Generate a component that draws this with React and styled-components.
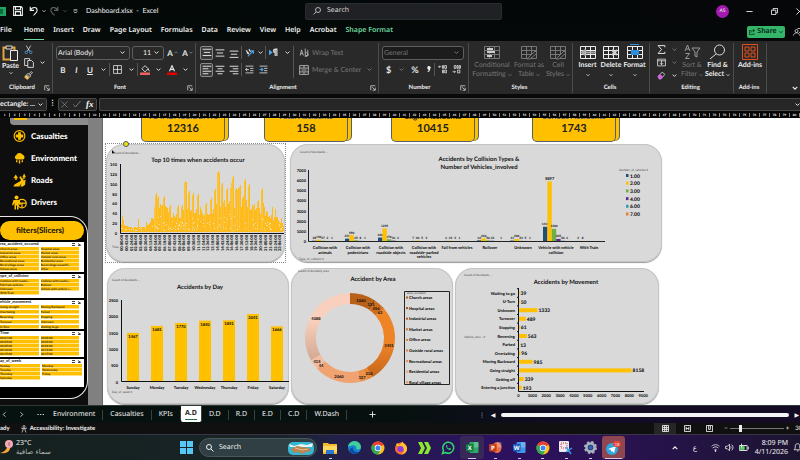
import React from "react";
import styled, { createGlobalStyle, css } from "styled-components";

const UI = '"Noto Sans", "Open Sans", sans-serif';
const NARROW = 'Lato, "Open Sans", sans-serif';
const CHART = 'Lato, "Open Sans", sans-serif';
const GOLD = "#ffc000";

const GlobalStyle = createGlobalStyle`
  * { box-sizing: border-box; }
  body { margin: 0; background: #050808; overflow: hidden; text-rendering: geometricPrecision; }
  button, input, select { font: inherit; color: inherit; background: none; border: 0; padding: 0; margin: 0; min-width: 0; text-rendering: inherit; }
  svg { display: block; flex: none; }
`;

/* ---------- icons ---------- */

const Icon = ({ s = 10, w, sw = 1.4, box = 16, children }) => (
  <svg width={w || s} height={s} viewBox={`0 0 ${w ? (box * w) / s : box} ${box}`} fill="none" stroke="currentColor" strokeWidth={sw} aria-hidden="true">
    {children}
  </svg>
);
const Chevron = ({ s = 5 }) => <Icon s={s} sw={3}><path d="M2 5l6 6 6-6" /></Icon>;
const Lines = ({ rows }) => <Icon s={10} sw={1.5}>{rows.map(([x, y, l]) => <path key={y} d={`M${x} ${y}h${l}`} />)}</Icon>;
const Launcher = () => <Icon s={6} sw={1.8}><path d="M2 14V2h12M6 6l7 7M14 7v7H7" /></Icon>;
const GridArt = ({ accent, extra }) => (
  <svg width="18" height="16" viewBox="0 0 18 16" fill="none" stroke="currentColor" aria-hidden="true">
    <path d="M1.5 2.5h15v12h-15zM1.5 6.5h15M1.5 10.5h15M6.5 2.5v12M11.5 2.5v12" />
    {accent && <rect x="5" y="6" width="8" height="5" fill={accent} stroke="none" />}
    {extra}
  </svg>
);

/* ---------- window frame ---------- */

const Window = styled.div`
  min-height: 100vh; display: flex; flex-direction: column; overflow: hidden;
  font: 7px/10px ${UI}; color: #f2f2f2; background: #050808;
`;
const TitleBar = styled.header`
  height: 22px; display: grid; grid-template-columns: 305px minmax(80px, 197px) 1fr; align-items: center;
  background: linear-gradient(90deg, #040a08, #030708 60%, #060709);
`;
const QuickAccess = styled.div`display: flex; align-items: center; gap: 3px;`;
const QuickButton = styled.button`
  display: flex; align-items: center; justify-content: center; width: ${p => p.$w || 12}px; height: 14px;
  color: ${p => (p.$dim ? "#666" : "#f2f2f2")};
`;
const DocTitle = styled.span`margin-left: 2px; white-space: pre; font-family: ${NARROW};`;
const TopSearch = styled.label`
  display: flex; align-items: center; gap: 6px; height: 17px; padding-left: 7px;
  background: #202124; border: 1px solid #2b2c2f; border-radius: 2px; color: #d8d8d8;
  input { flex: 1; } input::placeholder { color: #d8d8d8; opacity: 1; }
`;
const WindowButtons = styled.div`display: flex; justify-content: flex-end; align-items: center; gap: 13px; margin-right: -5px;`;
const Avatar = styled.button`
  width: 13px; height: 13px; border-radius: 50%; background: #a21bae; font-size: 5px; line-height: 13px; text-align: center; margin-right: 1px;
`;

const TabStrip = styled.nav`display: flex; align-items: center; height: 19px; background: linear-gradient(90deg, #030a08, #050708);`;
const RibbonTab = styled.button`
  height: 16px; margin-right: ${p => (p.$first ? 12 : 9)}px; font-weight: 600; white-space: nowrap;
  color: ${p => (p.$context ? "#70d8a0" : "#f2f2f2")};
  border-bottom: 1px solid ${p => (p.$active ? "#70d8a0" : "transparent")};
`;
const ShareButton = styled.button`
  display: flex; align-items: center; justify-content: center; gap: 2px; width: 38px; height: 12px; margin-left: auto;
  border-radius: 2px; background: #34b56a; color: #06200f; font-weight: 600;
`;
const PeopleButton = styled.button`margin: 0 -1px 0 8px;`;

/* ---------- ribbon ---------- */

const Ribbon = styled.section`display: flex; height: 53px; background: #292929; padding: 2px 0 1px; font-family: ${NARROW};`;
const Group = styled.section`
  flex: ${p => (p.$w ? `0 0 ${p.$w}px` : "1 1 0")}; min-width: 0;
  display: flex; flex-direction: column; border-right: ${p => (p.$w ? "1px solid #4c4c4c" : "0")};
`;
const GroupBody = styled.div`flex: 1; display: flex; padding-left: ${p => p.$pad || 0}px;`;
const GroupFoot = styled.footer`
  display: grid; grid-template-columns: 1fr auto; align-items: center; height: 10px; padding-right: 2px;
  font-size: 6px; font-weight: 700; text-align: center; color: #eee;
`;
const Column = styled.div`display: flex; flex-direction: column; padding-top: ${p => p.$top || 0}px;`;
const Row = styled.div`display: flex; align-items: center; height: ${p => p.$h || 17}px; gap: ${p => p.$gap || 0}px;`;
const Tool = styled.button`
  display: flex; align-items: center; justify-content: center; gap: 3px; white-space: nowrap;
  width: ${p => (p.$w ? `${p.$w}px` : "auto")}; height: ${p => p.$h || 14}px; border-radius: 2px;
  color: ${p => (p.$dim ? "#777" : "#e6e6e6")}; margin-left: ${p => p.$m || 0}px;
  ${p => p.$on && css`border: 1px solid #8a8a8a; background: #383838;`}
`;
const Letter = styled(Tool)`gap: 1px; font-size: ${p => p.$size || 8}px; font-weight: 700; font-style: ${p => (p.$italic ? "italic" : "normal")}; text-decoration: ${p => (p.$underline ? "underline" : "none")};`;
const Rule = styled.i`width: 1px; height: ${p => p.$h || 13}px; background: #555; flex: none;`;
const BigTool = styled.button`
  width: ${p => p.$w}px; display: flex; flex-direction: column; align-items: center; padding-top: 1px;
  line-height: 9px; color: ${p => (p.$dim ? "#777" : "#eee")};
  svg + span { margin-top: 1px; }
`;
const BigLabel = styled.span`display: flex; align-items: center; gap: 2px; white-space: nowrap; min-height: 9px; font-weight: ${p => (p.$strong ? 700 : 400)};`;
const Picker = styled.label`
  display: flex; align-items: center; width: ${p => p.$w}px; height: 14px; padding: 0 4px 0 ${p => p.$pad || 1}px;
  border: 1px solid #5e5e5e; border-radius: 3px; color: ${p => (p.$dim ? "#777" : "#f2f2f2")};
  background: ${p => (p.$dim ? "#1c1c1c" : "transparent")};
  select { flex: 1; appearance: none; }
`;

/* ---------- formula bar and ruler ---------- */

const FormulaBar = styled.section`display: flex; align-items: center; height: 18px; padding-top: 2px; gap: 2px; background: #070a09;`;
const NameBox = styled.label`
  display: flex; align-items: center; width: 47px; height: 13px; overflow: hidden; padding-right: 3px;
  background: #262626; border: 1px solid #4a4a4a; border-left: 0; border-radius: 0 2px 2px 0;
  input { flex: 1; width: 38px; font-family: ${NARROW}; font-weight: 700; }
`;
const BarDots = styled.span`width: 7px; text-align: center; font-weight: 700;`;
const FxBox = styled.div`
  display: flex; align-items: center; justify-content: space-around; width: 39px; height: 13px;
  background: #262626; border: 1px solid #4a4a4a; border-radius: 2px; color: #999;
`;
const FxButton = styled.button`font: italic 700 9px/11px "Liberation Serif", serif; color: #fff;`;
const FormulaInput = styled.label`
  flex: 1; height: 13px; display: flex; align-items: center; background: #262626; border: 1px solid #4a4a4a; border-right: 0; border-radius: 2px 0 0 2px;
  input { flex: 1; }
`;
const Ruler = styled.div`display: flex; height: 6px; overflow: hidden; background: #050505;`;
const RulerMark = styled.span`
  flex: 1 0 10px; height: 4px; margin-top: 1px; border-right: 1px solid #888;
  font: 700 3px/4px ${CHART}; text-align: center; color: #fff;
`;

/* ---------- worksheet ---------- */

const Sheet = styled.main`flex: 1; display: grid; grid-template-columns: 103px minmax(0, 1fr); min-height: 287px; background: #fff; overflow: hidden;`;
const Side = styled.aside`background: #808080; padding-right: 14px; display: flex; border-right: 1px solid #666; overflow: hidden;`;
const SidePanel = styled.div`flex: 1; min-width: 0; background: #0e0e0e; display: flex; flex-direction: column;`;
const Shelf = styled.div`height: 7px; margin-left: 10px; padding-left: 4px; background: #8c8c8c; border-bottom-left-radius: 4px;
  &::before { content: ""; display: block; width: 13px; height: 2px; background: ${GOLD}; }`;
const Menu = styled.nav`display: flex; flex-direction: column; padding-left: 12px; height: 91px;`;
const MenuLink = styled.a`
  display: flex; align-items: center; gap: 4px; height: 22px;
  color: #fff; text-decoration: none; font: 900 8px/12px ${NARROW};
`;
const SlicerFrame = styled.section`
  flex: 1; margin: 0 0 6px; overflow: hidden; border: solid #e8e8e8; border-width: 1px 1px 1px 0;
  border-radius: 0 18px 18px 0; padding: 4px 3px 0 0; background: #000;
`;
const SlicerButton = styled.button`
  display: block; width: 100%; height: 19px; border-radius: 10px; background: ${GOLD}; color: #1f1a00;
  font: 900 8px/19px ${NARROW}; padding-right: 4px;
`;
const Slicer = styled.section`
  display: flex; flex-direction: column; height: ${p => p.$h}px; margin-top: 2px; background: #fff; color: #111; overflow: hidden;
  font: 700 4px/4px ${CHART};
`;
const SlicerHead = styled.header`display: flex; justify-content: space-between; height: 5px; padding: 0 3px 0 0; white-space: nowrap; svg { margin-top: 1px; }`;
const SlicerGrid = styled.div`
  display: grid; grid-template-columns: 1fr 1fr; grid-auto-rows: 4px; gap: ${p => (p.$loose ? 1 : 0)}px 2px;
  margin-right: ${p => (p.$scroll ? 5 : 2)}px;
`;
const SlicerItem = styled.button`height: 4px; background: ${GOLD}; box-shadow: inset 0 -1px 0 #ffe08a; color: #2a1e00; text-align: left; font-size: 3px; line-height: 4px; white-space: nowrap; overflow: hidden;`;

const Canvas = styled.div`display: flex; flex-direction: column; min-width: 0;`;
const KpiRow = styled.div`display: grid; grid-template-columns: 123fr 127fr 141fr 268fr; height: 26px; padding-left: 38px;`;
const Kpi = styled.article`
  width: 84px; height: 24px; background: ${GOLD}; border: 1px solid #53606b; border-top: 0; border-radius: 0 0 5px 5px;
  box-shadow: 3px -1px 0 ${GOLD}, 4px -1px 0 #53606b; text-align: center; overflow: hidden; color: #222; font-family: ${CHART};
`;
const KpiLabel = styled.h3`margin: -7px 0 0; font-size: 8px; line-height: 10px; font-weight: 700; color: ${p => (p.$dark ? "#222" : "#4a5680")}; white-space: nowrap;`;
const KpiValue = styled.p`margin: 2px 0 0; font-size: 11px; line-height: 12px; font-weight: 700;`;
const TopCharts = styled.div`display: grid; grid-template-columns: 179fr 372fr; gap: 5px; padding: 0 138px 0 3px;`;
const BottomCharts = styled.div`display: grid; grid-template-columns: 182fr 162fr 204fr; gap: 2px; padding: 6px 141px 0 4px;`;
const Card = styled.article`position: relative; background: #d9d9d9; border-radius: 18px; box-shadow: inset 0 0 0 1px #c4c4c4, 0 1px 1px #999;`;
const Selection = styled.div`outline: 1px dotted #888;`;
const Handle = styled.i`position: absolute; left: 17px; top: -3px; width: 6px; height: 6px; border-radius: 50%; background: #f4e600; border: 1px solid #4d5a66;`;
const Plot = styled.svg`width: 100%; height: auto; font-family: ${CHART}; font-weight: 900; fill: #111;`;

const T = ({ x, y, s = 4, a = "middle", children, ...rest }) => (
  <text x={x} y={y} fontSize={s} textAnchor={a} {...rest}>{children}</text>
);
const Title = p => <T s={6} fontWeight="700" {...p} />;
const Field = ({ x, y, children = "Count of Accidents …" }) => <T x={x} y={y} s={3} a="start" fill="#444" fontWeight="400">{children}</T>;

/* ---------- chart data ---------- */

const envelope = [[120, 8], [132, 3], [145, 4], [153, 13], [157, 24], [163, 26], [170, 17], [178, 14], [186, 22], [192, 24], [200, 20], [208, 18], [217, 26], [224, 24], [231, 30], [237, 28], [245, 30], [251, 24], [258, 20], [263, 22], [270, 14], [277, 12], [283, 7]];
const peaks = { 122: 15, 123: 11, 138: 12, 146: 9, 155: 26, 156: 38, 158: 35, 162: 26, 164: 35, 167: 23, 170: 26, 178: 26, 182: 26, 185: 50, 186: 49, 189: 40, 193: 38, 198: 37, 200: 24, 206: 28, 211: 33, 215: 42, 218: 60, 219: 58, 222: 48, 224: 31, 227: 43, 231: 45, 232: 50, 233: 55, 236: 43, 238: 43, 240: 46, 245: 52, 249: 47, 254: 27, 258: 31, 262: 43, 263: 28, 268: 14, 272: 24, 275: 22, 281: 13 };
const level = x => {
  const i = envelope.findIndex(([px]) => px >= x);
  if (i < 1) return envelope[0][1];
  const [x0, y0] = envelope[i - 1];
  const [x1, y1] = envelope[i];
  return y0 + ((y1 - y0) * (x - x0)) / (x1 - x0);
};
const noise = n => { const v = Math.sin(n * 12.9898) * 43758.5453; return v - Math.floor(v); };
const timeBars = Array.from({ length: 163 }, (_, i) => {
  const x = 120 + i + 1;
  return [x, peaks[x] || Math.round(level(x) * (0.7 + noise(i) * 0.5))];
});
const specks = Array.from({ length: 120 }, (_, i) => {
  const x = 121 + Math.floor(noise(i + 500) * 162);
  return [x, 230 - Math.floor(noise(i + 900) * Math.max(3, level(x) * 0.6))];
});
const timeFill = `M121 232${envelope.map(([x, h]) => `L${Math.max(121, x)} ${231 - h * 0.8}`).join("")}V232Z`;

const collisions = [
  [["Collision with", "animals"], [28, 130, 27, 2, 1]],
  [["Collision with", "pedestrians"], [231, 590, 65, 8, 1]],
  [["Collision with", "roadside objects"], [340, 1239, 170, 36, 4]],
  [["Collision with", "roadside-parked", "vehicles"], [7, 40, 5, 2]],
  [["Fall from vehicles"], [6, 24, 3, 1]],
  [["Rollover"], [64, 260, 50, 22, 0, 1]],
  [["Unknown"], [41, 200, 24, 5, 1]],
  [["Vehicle with vehicle", "collision"], [1410, 5897, 1200, 205, 30, 6]],
  [["With Train"], [2, 8]],
];
const seriesColors = ["#1f4e79", GOLD, "#70ad47", "#5b2d90", "#2e9bc6", "#ed7d31"];
const days = [["Sunday", 1467], ["Monday", 1681], ["Tuesday", 1770], ["Wednesday", 1840], ["Thursday", 1851], ["Friday", 2041], ["Saturday", 1666]];
const movements = [["Waiting to go", 39], ["U-Turn", 50], ["Unknown", 1333], ["Turnover", 489], ["Stopping", 61], ["Reversing", 563], ["Parked", 13], ["Overtaking", 96], ["Moving Backward", 985], ["Going straight", 8158], ["Getting off", 339], ["Entering a junction", 193]];
const areas = [
  ["Church areas", 1060, "#b96118"], ["Hospital areas", 121, "#a9540f"], ["Industrial areas", 456, "#cf6c1c"], ["Market areas", 63, "#d87420"],
  ["Office areas", 3451, "url(#office)"], ["Outside rural areas", 218, "#e8862f"], ["Recreational areas", 327, "#ee8f4a"],
  ["Residential areas", 2060, "#f0a271"], ["Rural village areas", 44, "#f5b593"], ["School areas", 415, "#f2bda2"], ["Other", 4088, "url(#other)"],
];
const swatches = ["#b96118", "#a9540f", "#c65911", "#d87420", "#ed7d31", "#ed7d31", "#f08c45", "#f4a36f", "#f0904f"];
const areaSum = areas.reduce((t, a) => t + a[1], 0);
const polar = (r, f) => `${350 + r * Math.sin(f * 2 * Math.PI)} ${338 - r * Math.cos(f * 2 * Math.PI)}`;
const ring = (f0, f1) => {
  const big = f1 - f0 > 0.5 ? 1 : 0;
  return `M${polar(45, f0)}A45 45 0 ${big} 1 ${polar(45, f1)}L${polar(34, f1)}A34 34 0 ${big} 0 ${polar(34, f0)}Z`;
};
const areaLabels = [[1060, 361, 302], [121, 371, 306], [456, 376, 310], [63, 380, 314], [3451, 389, 347], [218, 369, 375], [327, 362, 379], [2060, 339, 378], [44, 321, 367], [415, 317, 363], [4088, 316, 320]];

const TimesChart = () => (
  <Plot viewBox="106 144 179 118" role="img" aria-label="Top 10 times when accidents occur">
    <Field x={113} y={154} />
    <path d="M112 150l3 3h-2l-1 1z" fill="#111" />
    <Title x={198} y={162}>Top 10 times when accidents occur</Title>
    {[140, 120, 100, 80, 60, 40, 20, 0].map((v, i) => <T key={v} x={117} y={166 + i * 9.85} a="end">{v}</T>)}
    <path d="M121 232h162v-2h-162z" fill="#fff3b8" />
    <path d={timeFill} fill="#fdbb1e" />
    {timeBars.map(([x, h]) => <rect key={x} x={x} y={231 - h} width="1" height={h} fill="#fdbb1e" />)}
    {timeBars.filter(([x]) => peaks[x] > 24).map(([x, h]) => <rect key={x} x={x - 1} y={233 - h} width="1" height={h - 2} fill="#fbc23c" />)}
    {specks.map(([x, y], i) => <rect key={i} x={x} y={y} width="1" height="1" fill={i % 3 ? "#f9e2a0" : "#e4dcc8"} />)}
    <path d="M120.500 164v69.500H284" fill="none" stroke="#111" />
    {Array.from({ length: 34 }, (_, i) => {
      const m = i * 42;
      const label = `${String(Math.floor(m / 60)).padStart(2, "0")}:${String(m % 60).padStart(2, "0")}:00`;
      return <text key={i} fontSize="4" textAnchor="end" transform={`translate(${123 + i * 4.8} 235) rotate(-90)`}>{label}</text>;
    })}
    <Field x={112} y={248}>Time</Field>
  </Plot>
);

const CollisionChart = () => (
  <Plot viewBox="290 144 372 118" role="img" aria-label="Accidents by collision types">
    <Field x={300} y={153} />
    <Title x={479} y={161}>Accidents by Collision Types &amp;</Title>
    <Title x={479} y={169}>Number of Vehicles_involved</Title>
    {[7000, 6000, 5000, 4000, 3000, 2000, 1000, 0].map((v, i) => <T key={v} x={306} y={172 + i * 10.15} a="end">{v}</T>)}
    {collisions.map(([names, values], g) => {
      const cx = 325 + g * 33;
      return (
        <g key={g}>
          {values.map((v, i) => {
            const h = v * 0.0101;
            const x = cx - 13 + i * 4.4;
            return (
              <g key={i}>
                <rect x={x} y={241 - h} width="4.4" height={h} fill={seriesColors[i]} />
                {v > 0 && <T x={x + 2.2} y={239.5 - h} s={v > 4000 ? 4 : 3}>{v}</T>}
              </g>
            );
          })}
          {names.map((n, i) => <T key={n} x={cx} y={249 + i * 4.5}>{n}</T>)}
        </g>
      );
    })}
    <path d="M308.500 170v71.500H605" fill="none" stroke="#222" />
    <Field x={619} y={171}>Number_of_vehicles ▾</Field>
    {["1.00", "2.00", "3.00", "4.00", "6.00", "7.00"].map((n, i) => (
      <g key={n}>
        <rect x="626" y={174 + i * 7.7} width="2.5" height="3" fill={seriesColors[i]} />
        <T x={630} y={177.5 + i * 7.7} s={5} a="start">{n}</T>
      </g>
    ))}
    <Field x={299} y={260}>Type_of_collision ▾</Field>
  </Plot>
);

const DayChart = () => (
  <Plot viewBox="107 268 182 136" role="img" aria-label="Accidents by day">
    <Field x={112} y={281} />
    <Title x={200} y={289}>Accidents by Day</Title>
    {[2500, 2000, 1500, 1000, 500, 0].map((v, i) => <T key={v} x={118} y={302 + i * 16.3} a="end">{v}</T>)}
    {days.map(([d, v], i) => {
      const h = v * 0.0328;
      const cx = 133 + i * 24;
      return (
        <g key={d}>
          <rect x={cx - 6} y={381 - h} width="12" height={h} fill={GOLD} />
          <T x={cx} y={386 - h}>{v}</T>
          <T x={cx} y={389}>{d}</T>
        </g>
      );
    })}
    <path d="M121.500 300v81.500H289" fill="none" stroke="#111" />
    <Field x={112} y={393}>Day_of_week ▾</Field>
  </Plot>
);

const AreaChart = () => (
  <Plot viewBox="291 268 162 136" role="img" aria-label="Accident by area">
    <defs>
      <linearGradient id="office" x1="0" y1="0" x2="0" y2="1"><stop offset="0.5" stopColor="#ef8427" /><stop offset="1" stopColor="#c5661c" /></linearGradient>
      <linearGradient id="other" x1="0" y1="0" x2="0" y2="1"><stop offset="0.4" stopColor="#f8d0bd" /><stop offset="1" stopColor="#d3a893" /></linearGradient>
    </defs>
    <Field x={298} y={272}>Count of Accident_area</Field>
    <Title x={373} y={281}>Accident by Area</Title>
    {areas.map(([n, v, c], i) => {
      const start = areas.slice(0, i).reduce((t, a) => t + a[1], 0) / areaSum;
      return <path key={n} d={ring(start, start + v / areaSum)} fill={c} />;
    })}
    {areaLabels.map(([v, x, y]) => <T key={v} x={x} y={y}>{v}</T>)}
    <path d="M404.500 291.500h45v93h-45z" fill="none" stroke="#222" />
    <Field x={407} y={294}>Area_accident</Field>
    {areas.slice(0, 9).map(([n], i) => (
      <g key={n}>
        <rect x="406" y={296.5 + i * 10.6} width="2" height="2" fill={swatches[i]} />
        <T x={409} y={299 + i * 10.6} a="start">{n}</T>
      </g>
    ))}
  </Plot>
);

const MovementChart = () => (
  <Plot viewBox="455 268 204 136" role="img" aria-label="Accidents by movement">
    <Field x={464} y={276} />
    <Title x={566} y={284}>Accidents by Movement</Title>
    {movements.map(([n, v], i) => {
      const y = 293 + i * 8.6;
      return (
        <g key={n}>
          <T x={515} y={y + 1.5} a="end">{n}</T>
          <path d={`M517 ${y - 4.3}h2`} stroke="#111" />
          <rect x="519" y={y - 2} width={v * 0.0138} height="4" fill={GOLD} />
          <T x={520 + v * 0.0138} y={y + 2} s={5} a="start">{v}</T>
        </g>
      );
    })}
    <path d="M518.500 288v103.500H644" fill="none" stroke="#111" />
    {[0, 1, 2, 3, 4, 5, 6, 7, 8, 9].map(v => <T key={v} x={518.5 + v * 13.85} y={397} s={4}>{v * 1000}</T>)}
    <Field x={464} y={338}>Vehicle_mov… ▾</Field>
  </Plot>
);

/* ---------- sheet tabs and status ---------- */

const SheetTabs = styled.nav`display: flex; align-items: center; height: 18px; border-top: 1px solid #2e3a36; background: linear-gradient(90deg, #06120f, #07100f 50%, #130c26 75%, #150b24);`;
const NavButton = styled.button`width: ${p => p.$w || 17}px; display: flex; justify-content: center; align-items: center;`;
const SheetTab = styled.button`
  height: ${p => (p.$active ? 16 : 10)}px; padding: 0 7px; white-space: nowrap;
  border-right: 1px solid #38413e; color: #f2f2f2; align-self: ${p => (p.$active ? "flex-start" : "center")};
  ${p => p.$active && css`background: #fff; color: #222; font-weight: 700; border-radius: 0 0 2px 2px; padding: 0 4px;
    span { border-bottom: 1px solid #217346; padding-bottom: 1px; }`}
`;
const Scroller = styled.div`display: flex; align-items: center; gap: 3px; width: 40%; margin-left: auto; margin-right: 1px; font-size: 6px;`;
const Thumb = styled.div`flex: 1; height: 4px; border-radius: 2px; background: #f4f4f4; margin-right: 2px;`;
const Status = styled.footer`display: flex; align-items: center; height: 11px; background: #101010; font: 700 6px/10px ${NARROW}; overflow: hidden;`;
const StatusText = styled.span`margin-left: ${p => p.$m || 0}px; white-space: nowrap;`;
const Views = styled.div`display: flex; align-items: center; margin-left: auto;`;
const ViewButton = styled.button`display: flex; align-items: center; justify-content: center; width: 22px; height: 11px; background: ${p => (p.$active ? "#262626" : "transparent")};`;
const Zoom = styled.label`
  display: flex; align-items: center; gap: 2px; margin: 0 -7px 0 4px; font-weight: 400;
  input { appearance: none; width: 54px; height: 1px; background: #777; }
  input::-webkit-slider-thumb { appearance: none; width: 3px; height: 7px; background: #eee; }
`;

/* ---------- taskbar ---------- */

const Taskbar = styled.footer`
  display: grid; grid-template-columns: 174px 1fr auto; align-items: center; height: 26px; border-top: 1px solid #3a3446;
  background: linear-gradient(90deg, #15211f, #182427 35%, #22204a 42%, #2c1160 62%, #2a1254 75%, #1c1530);
`;
const Weather = styled.button`display: flex; align-items: center; gap: 3px; text-align: left; line-height: 9px;`;
const Arabic = styled.span`display: block; font-family: "DejaVu Sans", sans-serif; font-size: 7px; color: #bbb; white-space: nowrap;`;
const Apps = styled.div`display: flex; align-items: center;`;
const AppButton = styled.button`
  position: relative; display: flex; align-items: center; justify-content: center; width: ${p => p.$w || 24}px; flex: 0 1 auto; height: 23px; border-radius: 3px;
  ${p => p.$active && css`background: ${p.$active};`}
  ${p => p.$open && css`&::after { content: ""; position: absolute; bottom: 0; width: ${p.$open}px; height: 1px; background: #d8c8e8; }`}
`;
const TaskSearch = styled.label`
  display: flex; align-items: center; gap: 5px; width: 118px; height: 19px; padding: 0 2px 0 6px; margin: 0 1px 0 1px;
  border: 1px solid #4a585c; border-radius: 10px; background: #303f43;
  input { flex: 1; } input::placeholder { color: #eee; opacity: 1; }
`;
const Tray = styled.div`display: flex; align-items: center; gap: 5px; margin-right: -2px;`;
const InputLang = styled.span`width: 10px; margin: 0 3px 0 10px; font-family: "DejaVu Sans", sans-serif;`;
const Clock = styled.time`text-align: right; line-height: 9px; white-space: nowrap; margin-left: 1px;`;

const Office = ({ color, dark, letter }) => (
  <svg width="13" height="13" viewBox="0 0 26 26" aria-hidden="true">
    <rect x="7" y="2" width="18" height="22" rx={letter === "P" ? 11 : 2} fill={color} />
    <path d="M16 2h7a2 2 0 0 1 2 2v9h-9z" fill="#fff" opacity=".25" />
    <rect x="0" y="6" width="15" height="15" rx="2" fill={dark} />
    <text x="7.5" y="18" fontSize="12" fontWeight="700" fill="#fff" textAnchor="middle">{letter}</text>
  </svg>
);
const Chrome = () => (
  <svg width="14" height="14" viewBox="0 0 28 28" aria-hidden="true">
    <circle cx="14" cy="14" r="13" fill="#fbc116" />
    <path d="M14 14L2.700 7.500A13 13 0 0 1 25.300 7.500z" fill="#e94235" />
    <path d="M2.700 7.500A13 13 0 0 0 14 27l5.500-10z" fill="#31a852" />
    <circle cx="14" cy="14" r="6.5" fill="#fff" /><circle cx="14" cy="14" r="5" fill="#3f83f8" />
  </svg>
);

const slicers = [
  { name: "rea_accident_occured", h: 30, scroll: true, items: ["Church areas", "Hospital areas", "Industrial areas", "Market areas", "Office areas", "Outside rural areas", "Recreational areas", "Residential areas", "Rural village areas", "Rural village areasOf…", "School areas", "Other"] },
  { name: "ype_of_collision", h: 24, scroll: true, items: ["Collision with roadsi…", "Collision with roadsi…", "Fall from vehicles", "Rollover", "Unknown", "Vehicle with vehicle c…", "With Train"] },
  { name: "ehicle_movement", h: 29, scroll: true, loose: true, items: ["Going straight", "Moving Backward", "Overtaking", "Parked", "Reversing", "Stopping", "Turnover", "Unknown", "U-Turn", "Waiting to go"] },
  { name: "Time", h: 26, scroll: true, items: ["00:01:00", "00:02:00", "00:03:00", "00:04:00", "00:05:00", "00:06:00", "00:10:00", "00:12:00", "00:15:00", "00:17:00"] },
  { name: "ay_of_week", h: 28, items: ["Sunday", "Monday", "Tuesday", "Wednesday", "Thursday", "Friday", "Saturday"] },
];

const MenuIcon = ({ kind }) => (
  <svg width="15" height={kind === "drivers" ? 17 : 14} viewBox="0 0 30 30" fill={GOLD} aria-hidden="true">
    {kind === "casualties" && <><circle cx="15" cy="15" r="11.5" fill="none" stroke={GOLD} strokeWidth="2.5" /><path d="M12 7h6v5h5v6h-5v5h-6v-5H7v-6h5z" /></>}
    {kind === "environment" && <><path d="M8 18a5 5 0 0 1 0-9 8 8 0 0 1 14-1 5.500 5.500 0 0 1 1 10z" /><path d="M9 20v4M15 20v7M21 20v4" stroke={GOLD} strokeWidth="3" /></>}
    {kind === "roads" && <><path d="M2 29c2-8 16-9 16-14 0-3-5-4-2-8l3 1c-1 3 6 4 5 9-1 6-8 6-9 12z" /><path d="M7 3l5 8H9v4H6v-4H2zM25 1l4 8h-3v4h-3V9h-2zM21 18l7-4-1 11-5 4h-5z" /></>}
    {kind === "drivers" && <><circle cx="9" cy="5" r="4" /><path d="M3 10h12l3 9-3 1-2-4v13h-3v-8H8v8H5V16l-3 5-2-1z" /><circle cx="20" cy="17" r="8.5" fill="none" stroke={GOLD} strokeWidth="2.5" /><path d="M13 16h15M20 17v8" stroke={GOLD} strokeWidth="2.5" /></>}
  </svg>
);

const Drop = ({ w = 12, dim, label }) => <Tool $w={w} $dim={dim} aria-label={label || "More options"}><Chevron /></Tool>;
const pen = <path d="M8 14l7-7 2 2-7 6H7z" fill="#292929" stroke="currentColor" />;

export default function App() {
  return (
    <Window>
      <GlobalStyle />
      <TitleBar>
        <QuickAccess>
          <QuickButton $w={6} aria-label="Excel"><svg width="6" height="9" viewBox="0 0 6 9"><path d="M0 0h6v9H0z" fill="#1fa463" /><path d="M0 2h3v5H0z" fill="#0e6b3c" /></svg></QuickButton>
          <QuickButton $w={17} aria-label="Save"><Icon s={10} sw={1.7}><path d="M1 1h12l2 2v12H1zM4 1v5h8V1M4 15V9h8v6" /></Icon></QuickButton>
          <QuickButton $w={10} aria-label="Undo"><Icon s={10} sw={1.7}><path d="M2 1v6h6M2 7c3-6 11-6 11 0 0 3-3 5-6 8" /></Icon></QuickButton>
          <QuickButton $w={3} aria-label="Undo history"><Chevron s={4} /></QuickButton>
          <QuickButton $w={12} $dim aria-label="Redo"><Icon s={10} sw={1.7}><path d="M14 1v6H8M14 7C11 1 3 1 3 7c0 3 3 5 6 8" /></Icon></QuickButton>
          <QuickButton $w={3} $dim aria-label="Redo history"><Chevron s={4} /></QuickButton>
          <QuickButton $w={12} aria-label="Customize"><Icon s={5} sw={3}><path d="M2 3h12M3 8l5 5 5-5" /></Icon></QuickButton>
          <DocTitle>Dashboard.xlsx  -  Excel</DocTitle>
        </QuickAccess>
        <TopSearch>
          <Icon s={8} sw={1.6}><circle cx="10" cy="6" r="5" /><path d="M6 10l-5 5" /></Icon>
          <input aria-label="Search" placeholder="Search" />
        </TopSearch>
        <WindowButtons>
          <Avatar>AS</Avatar>
          <QuickButton aria-label="Minimize"><Icon s={7} sw={2}><path d="M1 8h14" /></Icon></QuickButton>
          <QuickButton aria-label="Restore"><Icon s={7} sw={2}><path d="M1 5h10v10H1zM5 5V1h10v10h-4" /></Icon></QuickButton>
          <QuickButton aria-label="Close"><Icon s={7} sw={2}><path d="M1 1l14 14M15 1L1 15" /></Icon></QuickButton>
        </WindowButtons>
      </TitleBar>

      <TabStrip>
        {["File", "Home", "Insert", "Draw", "Page Layout", "Formulas", "Data", "Review", "View", "Help", "Acrobat", "Shape Format"].map((t, i) => (
          <RibbonTab key={t} $first={i === 0} $active={i === 1} $context={i === 11}>{t}</RibbonTab>
        ))}
        <ShareButton><Icon s={6} sw={1.8}><path d="M6 4H1v11h12v-4M5 10c0-4 3-6 9-6M10 0l5 4-5 4" /></Icon>Share<Chevron s={4} /></ShareButton>
        <PeopleButton aria-label="Comments"><Icon s={8}><circle cx="7" cy="6" r="3" /><path d="M1 15c0-7 12-7 12 0M9 1h6v8h-3" /></Icon></PeopleButton>
      </TabStrip>

      <Ribbon>
        <Group $w={53}>
          <GroupBody>
            <BigTool $w={21}>
              <svg width="17" height="17" viewBox="0 0 17 17" fill="none"><path d="M1.500 3.500h11v12h-11z" stroke="#e8a33a" strokeWidth="2" /><path d="M4 2h6v3H4z" fill="#292929" stroke="#ddd" /><path d="M8.500 6.500h7v10h-7z" fill="#292929" stroke="#eee" /></svg>
              <BigLabel $strong>Paste</BigLabel><Chevron s={4} />
            </BigTool>
            <Column>
              <Row $h={13}><Tool $w={15} $h={12} aria-label="Cut"><Icon s={9}><path d="M4 1l6 10M12 1L6 11" /><circle cx="4" cy="13" r="2.3" stroke="#4aa3e8" /><circle cx="12" cy="13" r="2.3" stroke="#4aa3e8" /></Icon></Tool></Row>
              <Row $h={13}>
                <Tool $w={15} $h={12} aria-label="Copy"><Icon s={10}><path d="M6 12H1V1h8v3M6 4h6l3 3v8H6z" /></Icon></Tool><Drop />
              </Row>
              <Row $h={13}><Tool $w={15} $h={12} aria-label="Format painter"><Icon s={9}><path d="M9 5l4-4 2 2-4 4M7 4l5 5-2 2-5-5z" /><path d="M4 7l5 5-3 3-5-4z" fill="#f0c060" stroke="#f0c060" /></Icon></Tool></Row>
            </Column>
          </GroupBody>
          <GroupFoot>Clipboard<Launcher /></GroupFoot>
        </Group>

        <Group $w={143}>
          <GroupBody $pad={3}>
            <Column $top={1}>
              <Row $gap={2}>
                <Picker $w={74}><select aria-label="Font"><option>Arial (Body)</option></select><Chevron /></Picker>
                <Picker $w={32} $pad={10}><select aria-label="Font size"><option>11</option></select><Chevron /></Picker>
                <Letter $w={13} aria-label="Increase font size">A<Icon s={4} sw={3}><path d="M2 9l6-6 6 6" stroke="#4aa3e8" /></Icon></Letter>
                <Letter $w={13} aria-label="Decrease font size">A<Icon s={4} sw={3}><path d="M2 3l6 6 6-6" stroke="#4aa3e8" /></Icon></Letter>
              </Row>
              <Row>
                <Letter $w={14}>B</Letter><Letter $w={13} $italic>I</Letter><Letter $w={14} $underline>U</Letter><Drop />
                <Rule />
                <Tool $w={15} aria-label="Borders"><Icon s={9}><path d="M1 1h14v14H1zM8 1v14M1 8h14" /></Icon></Tool><Drop /><Rule />
                <Tool $w={14} aria-label="Fill colour"><Icon s={10}><path d="M3 6l5-5 5 5-5 5zM13 6l2 4" /><path d="M0 14h16" stroke="#f0625d" strokeWidth="4" /></Icon></Tool><Drop />
                <Tool $w={15} aria-label="Font colour"><Icon s={10} sw={1.8}><path d="M4 10l4-9 4 9M6 7h4" /><path d="M0 14h16" stroke="#e00000" strokeWidth="4" /></Icon></Tool><Drop />
              </Row>
            </Column>
          </GroupBody>
          <GroupFoot>Font<Launcher /></GroupFoot>
        </Group>

        <Group $w={183}>
          <GroupBody $pad={4}>
            <Column $top={1}>
              <Row>
                <Tool $w={13} $on aria-label="Top align"><Lines rows={[[1, 2, 14], [3, 7, 10], [1, 12, 14]]} /></Tool>
                <Tool $w={14} aria-label="Middle align"><Lines rows={[[1, 3, 14], [3, 8, 10], [1, 13, 14]]} /></Tool>
                <Tool $w={14} aria-label="Bottom align"><Lines rows={[[1, 5, 14], [3, 10, 10], [1, 15, 14]]} /></Tool>
                <Rule />
                <Tool $w={14} aria-label="Orientation"><Icon s={9} sw={2}><path d="M2 4l5 7M7 2l3 5M3 9h4" /><path d="M5 15L15 5M15 10V5h-5" stroke="#4aa3e8" /></Icon></Tool><Drop w={9} /><Rule />
                <Tool $w={15} aria-label="Text direction"><Icon s={9} sw={2}><path d="M1 5l4 3-4 3z" fill="#4aa3e8" stroke="#4aa3e8" /><path d="M11 14V2h4M14 2v12M11 8a3 3 0 0 1 0-6" /></Icon></Tool><Drop w={12} />
              </Row>
              <Row>
                <Tool $w={13} $on aria-label="Align left"><Lines rows={[[1, 2, 14], [1, 6, 9], [1, 10, 14], [1, 14, 9]]} /></Tool>
                <Tool $w={14} aria-label="Centre"><Lines rows={[[1, 2, 14], [4, 6, 8], [1, 10, 14], [4, 14, 8]]} /></Tool>
                <Tool $w={14} aria-label="Align right"><Lines rows={[[1, 2, 14], [6, 6, 9], [1, 10, 14], [6, 14, 9]]} /></Tool>
                <Rule />
                <Tool $w={14} aria-label="Decrease indent"><Icon s={9}><path d="M1 2h14M9 6h6M9 10h6M1 14h14M7 8H1M4 5L1 8l3 3" /></Icon></Tool>
                <Tool $w={14} aria-label="Increase indent"><Icon s={9}><path d="M1 2h14M9 6h6M9 10h6M1 14h14" /><path d="M1 8h6M4 5l3 3-3 3" stroke="#4aa3e8" strokeWidth="2" /></Icon></Tool>
              </Row>
            </Column>
            <Column $top={3}><Rule $h={32} /></Column>
            <Column $top={1}>
              <Row><Tool $dim $m={5}><Icon s={10} w={10}><path d="M4 3l-2 9M4 3l3 9M3 9h3M10 1v13M10 8a3 3 0 1 1 0 5M14 3v9h-3" stroke="#bbb" /></Icon>Wrap Text</Tool></Row>
              <Row><Tool $dim $m={5}><Icon s={10} w={10}><path d="M1 1h14v14H1zM1 5h14M1 11h14M8 1v4M8 11v4M4 8h8" stroke="#bbb" /></Icon>Merge &amp; Center</Tool><Drop w={16} dim /></Row>
            </Column>
          </GroupBody>
          <GroupFoot>Alignment<Launcher /></GroupFoot>
        </Group>

        <Group $w={90}>
          <GroupBody $pad={3}>
            <Column $top={1}>
              <Row><Picker $w={82} $dim><select aria-label="Number format"><option>General</option></select><Chevron /></Picker></Row>
              <Row>
                <Letter $w={13} $size={9}>$</Letter><Drop w={12} dim /><Letter $w={16} $size={9}>%</Letter>
                <Tool $w={11} aria-label="Comma style"><Icon s={9}><path d="M6 4a3 3 0 1 1 5 3c0 3-2 5-4 6l-1-1c2-1 2-2 2-4a3 3 0 0 1-2-4z" fill="#eee" stroke="none" /></Icon></Tool><Rule />
                <Tool $w={14} aria-label="Increase decimal"><Icon s={9}><path d="M6 3H1M3 1L1 3l2 2M8 1h2v5H8zM12 1h3v5h-3zM8 9h2v5H8zM12 9h3v5h-3z" /></Icon></Tool>
                <Tool $w={14} aria-label="Decrease decimal"><Icon s={9}><path d="M1 12h5M4 10l2 2-2 2M4 1h3v5H4zM9 1h2v5H9zM13 1h2v5h-2zM10 9h4v5h-4z" /></Icon></Tool>
              </Row>
            </Column>
          </GroupBody>
          <GroupFoot>Number<Launcher /></GroupFoot>
        </Group>

        <Group $w={104}>
          <GroupBody $pad={2}>
            <BigTool $w={42} $dim><GridArt extra={<path d="M4 5h6M4 8h8M4 12h5" stroke="#ccc" strokeWidth="2" />} /><BigLabel>Conditional</BigLabel><BigLabel>Formatting<Chevron s={4} /></BigLabel></BigTool>
            <BigTool $w={32} $dim><GridArt extra={pen} /><BigLabel>Format as</BigLabel><BigLabel>Table<Chevron s={4} /></BigLabel></BigTool>
            <BigTool $w={26} $dim><GridArt extra={pen} /><BigLabel>Cell</BigLabel><BigLabel>Styles<Chevron s={4} /></BigLabel></BigTool>
          </GroupBody>
          <GroupFoot>Styles</GroupFoot>
        </Group>

        <Group $w={77}>
          <GroupBody $pad={3}>
            <BigTool $w={23}><GridArt extra={<path d="M4 8.500h13M7 5.500l-4 3 4 3" stroke="#aaa" strokeWidth="2" />} /><BigLabel $strong>Insert</BigLabel><BigLabel><Chevron s={4} /></BigLabel></BigTool>
            <BigTool $w={24}><GridArt extra={<path d="M10 6l5 5M15 6l-5 5" stroke="#ccc" strokeWidth="2" />} /><BigLabel $strong>Delete</BigLabel><BigLabel><Chevron s={4} /></BigLabel></BigTool>
            <BigTool $w={23}><GridArt accent="#2f8fdf" extra={<path d="M4 .5h9" stroke="#2f8fdf" />} /><BigLabel $strong>Format</BigLabel><BigLabel><Chevron s={4} /></BigLabel></BigTool>
          </GroupBody>
          <GroupFoot>Cells</GroupFoot>
        </Group>

        <Group $w={84}>
          <GroupBody $pad={4}>
            <Column>
              <Row $h={13}><Tool $w={14} $h={12} aria-label="AutoSum"><Icon s={9} sw={1.7}><path d="M14 4V1H2l6 7-6 7h12v-3" /></Icon></Tool><Drop dim /></Row>
              <Row $h={13}><Tool $w={14} $h={12} aria-label="Fill"><Icon s={9}><path d="M1 2h14v12H1zM8 4v8M5 9l3 3 3-3M1 5h14" /></Icon></Tool><Drop dim /></Row>
              <Row $h={13}><Tool $w={14} $h={12} aria-label="Clear"><Icon s={9}><path d="M2 10l7-8 5 4-7 8H4z" stroke="#ddd" /><path d="M2 10l3-4 5 4-3 4H4z" fill="#d65fe0" stroke="#d65fe0" /></Icon></Tool><Drop /></Row>
            </Column>
            <BigTool $w={24} $dim><svg width="17" height="16" viewBox="0 0 17 16" fill="none" stroke="#999"><path d="M1 7l2.500-6L6 7M2 5h3M1.500 9.500h4l-4 5h4M8 4h8l-3 4v5l-2-1V8z" /></svg><BigLabel>Sort &amp;</BigLabel><BigLabel>Filter<Chevron s={4} /></BigLabel></BigTool>
            <BigTool $w={27}><svg width="17" height="16" viewBox="0 0 17 16" fill="none" stroke="#ddd"><circle cx="10.5" cy="6" r="5" /><path d="M7 10l-6 5" /></svg><BigLabel $strong>Find &amp;</BigLabel><BigLabel $strong>Select<Chevron s={4} /></BigLabel></BigTool>
          </GroupBody>
          <GroupFoot>Editing</GroupFoot>
        </Group>

        <Group $w={33}>
          <GroupBody>
            <BigTool $w={32}><svg width="16" height="16" viewBox="0 0 16 16" fill="none" stroke="#e0501e"><path d="M.5.5h15v15H.5zM3 3h4v4H3zM9 3h4v4H9zM3 9h4v4H3zM9 9h4v4H9z" /></svg><BigLabel $strong>Add-ins</BigLabel></BigTool>
          </GroupBody>
          <GroupFoot>Add-ins</GroupFoot>
        </Group>
        <Group><GroupBody /><GroupFoot><span /><Chevron s={6} /></GroupFoot></Group>
      </Ribbon>

      <FormulaBar>
        <NameBox><input aria-label="Name box" defaultValue="ectangle: ..." /><Chevron /></NameBox>
        <BarDots>⋮</BarDots>
        <FxBox>
          <button aria-label="Cancel"><Icon s={7}><path d="M1 1l14 14M15 1L1 15" /></Icon></button>
          <button aria-label="Enter"><Icon s={8}><path d="M1 9l4 5L15 2" /></Icon></button>
          <FxButton>fx</FxButton>
        </FxBox>
        <FormulaInput><input aria-label="Formula" /><Chevron /></FormulaInput>
      </FormulaBar>
      <Ruler>{Array.from({ length: 80 }, (_, i) => <RulerMark key={i}>{i + 1}</RulerMark>)}</Ruler>

      <Sheet>
        <Side>
          <SidePanel>
            <Shelf />
            <Menu>
              <MenuLink href="#casualties"><MenuIcon kind="casualties" />Casualties</MenuLink>
              <MenuLink href="#environment"><MenuIcon kind="environment" />Environment</MenuLink>
              <MenuLink href="#roads"><MenuIcon kind="roads" />Roads</MenuLink>
              <MenuLink href="#drivers"><MenuIcon kind="drivers" />Drivers</MenuLink>
            </Menu>
            <SlicerFrame>
              <SlicerButton>filters(Slicers)</SlicerButton>
              {slicers.map(({ name, h, scroll, loose, items }) => (
                <Slicer key={name} $h={h}>
                  <SlicerHead>{name}<svg width="9" height="3" viewBox="0 0 9 3" stroke="#444" fill="none"><path d="M0 .5h3M0 2.500h3M6 .5l3 2M6 2.500h2" /></svg></SlicerHead>
                  <SlicerGrid $scroll={scroll} $loose={loose}>{items.map((t, i) => <SlicerItem key={i}>{t}</SlicerItem>)}</SlicerGrid>
                </Slicer>
              ))}
            </SlicerFrame>
          </SidePanel>
        </Side>
        <Canvas>
          <KpiRow>
            <Kpi><KpiLabel>TOTAL ACCIDENTS</KpiLabel><KpiValue>12316</KpiValue></Kpi>
            <Kpi><KpiLabel>Fatal Accidents</KpiLabel><KpiValue>158</KpiValue></Kpi>
            <Kpi><KpiLabel $dark>Slight Accidents</KpiLabel><KpiValue>10415</KpiValue></Kpi>
            <Kpi><KpiLabel>Serious Accidents</KpiLabel><KpiValue>1743</KpiValue></Kpi>
          </KpiRow>
          <TopCharts>
            <Selection><Card><TimesChart /><Handle /></Card></Selection>
            <Card><CollisionChart /></Card>
          </TopCharts>
          <BottomCharts>
            <Card><DayChart /></Card>
            <Card><AreaChart /></Card>
            <Card><MovementChart /></Card>
          </BottomCharts>
        </Canvas>
      </Sheet>

      <SheetTabs>
        <NavButton $w={8} aria-label="Previous sheet"><Icon s={5} sw={2.5}><path d="M11 1L4 8l7 7" /></Icon></NavButton>
        <NavButton $w={26} aria-label="Next sheet"><Icon s={5} sw={2.5}><path d="M5 1l7 7-7 7" /></Icon></NavButton>
        <NavButton $w={12} aria-label="All sheets"><Icon s={7} sw={2}><path d="M1 8h3M7 8h3M13 8h3" /></Icon></NavButton>
        {["Environment", "Casualties", "KPIs", "A.D", "D.D", "R.D", "E.D", "C.D", "W.Dash"].map(t => (
          <SheetTab key={t} $active={t === "A.D"}><span>{t}</span></SheetTab>
        ))}
        <NavButton $w={50} aria-label="New sheet"><Icon s={7} sw={2}><path d="M8 1v14M1 8h14" /></Icon></NavButton>
        <Scroller><span>⋮</span><NavButton $w={10} aria-label="Scroll left">◀</NavButton><Thumb /><span>▶</span></Scroller>
      </SheetTabs>

      <Status>
        <StatusText>ady</StatusText>
        <StatusText $m={10}><Icon s={8}><circle cx="8" cy="3" r="2" /><path d="M2 6l4 1v3l-2 5M14 6l-4 1v3l2 5M6 7h4" /></Icon></StatusText>
        <StatusText $m={2}>Accessibility: Investigate</StatusText>
        <Views>
          <ViewButton $active aria-label="Normal view"><Icon s={7} sw={2}><path d="M1 1h14v14H1zM6 1v14M10 1v14M1 6h14M1 10h14" /></Icon></ViewButton>
          <ViewButton aria-label="Page layout view"><Icon s={7} sw={2}><path d="M1 1h14v14H1zM5 4v8M11 4v8M5 8h6" /></Icon></ViewButton>
          <ViewButton aria-label="Page break view"><Icon s={7} sw={2}><path d="M1 1h14v14H1zM6 1v9M10 1v9M6 10h4" /></Icon></ViewButton>
          <Zoom>− <input type="range" aria-label="Zoom" min="0" max="100" defaultValue="18" /> + <StatusText $m={4}>30%</StatusText></Zoom>
        </Views>
      </Status>

      <Taskbar>
        <Weather>
          <svg width="13" height="16" viewBox="0 0 13 16"><path d="M8 3c5 5 1 12-8 10 5-1 8-5 8-10z" fill="#f8a53a" /><circle cx="9" cy="4" r="4" fill="#f7a8b8" /><text x="9" y="6" fontSize="5" textAnchor="middle" fill="#222">1</text></svg>
          <span>23°C<Arabic dir="rtl" lang="ar">سماء صافية</Arabic></span>
        </Weather>
        <Apps>
          <AppButton aria-label="Start"><svg width="13" height="13" viewBox="0 0 13 13" fill="#56c8f5"><path d="M0 0h6v6H0zM7 0h6v6H7zM0 7h6v6H0zM7 7h6v6H7z" /></svg></AppButton>
          <TaskSearch>
            <Icon s={8} sw={2}><circle cx="6" cy="6" r="5" /><path d="M10 10l5 5" /></Icon>
            <input aria-label="Search Windows" placeholder="Search" />
            <svg width="26" height="14" viewBox="0 0 26 14"><rect y="1" width="26" height="13" rx="5" fill="#35b6d3" /><path d="M1 3l5 2 7-2 6 1 6-2-1 4H2z" fill="#e8f4f4" /><path d="M3 8l6-3 5 1 7 1 2 3-5 1-3 2-5-2-4 1z" fill="#b98352" /><path d="M7 7l7 2 6-1" stroke="#edc08d" fill="none" /></svg>
          </TaskSearch>
          <AppButton $open={3} aria-label="File Explorer"><svg width="14" height="12" viewBox="0 0 14 12"><path d="M0 1h5l1 1h8v10H0z" fill="#f6b82d" /><path d="M0 4h14v6H0z" fill="#ffd860" /><path d="M3 8h8v4H3z" fill="#2d78cf" /></svg></AppButton>
          <AppButton aria-label="Edge"><svg width="13" height="13" viewBox="0 0 26 26"><circle cx="13" cy="13" r="13" fill="#1683d8" /><path d="M0 12C1-3 25-4 26 12c0 6-8 6-10 3 2-4-3-8-8-6-5 1-8 2-8 3z" fill="#41cf9a" /><path d="M10 13c-2 8 7 11 13 8-4 6-12 6-17 2s-2-10 4-10z" fill="#0d4ca0" /></svg></AppButton>
          <AppButton $w={23} aria-label="Chrome"><Chrome /></AppButton>
          <AppButton aria-label="Firefox"><svg width="14" height="14" viewBox="0 0 28 28"><circle cx="14" cy="15" r="12" fill="#ff6a2b" /><path d="M4 9l2-5 5 4 6-7c2 5 9 7 9 14 0 8-7 12-12 12 7-4 8-10 3-14z" fill="#ffc52f" /><circle cx="13" cy="16" r="6" fill="#8b3be8" /></svg></AppButton>
          <AppButton $w={23} aria-label="Downloader"><svg width="13" height="12" viewBox="0 0 13 12" fill="#8bea2e"><path d="M0 0h4l3 6-3 6H0l3-6zM6 0h4l3 6-3 6H6l3-6z" /></svg></AppButton>
          <AppButton aria-label="WhatsApp"><svg width="14" height="14" viewBox="0 0 28 28" fill="none" stroke="#30d66b" strokeWidth="3"><path d="M3 25l2-6a11 11 0 1 1 4 4z" /><path d="M10 9c0 5 4 9 9 9l1-3-3-1-2 1-3-3 1-2-1-2z" fill="#30d66b" stroke="none" /></svg></AppButton>
          <AppButton $active="#382858" $open={8} aria-label="Excel"><Office color="#2ea866" dark="#107c41" letter="X" /></AppButton>
          <AppButton $open={3} $w={23} aria-label="PowerPoint"><Office color="#ee6c43" dark="#c43e1c" letter="P" /></AppButton>
          <AppButton $open={3} aria-label="Word"><Office color="#4095e5" dark="#185abd" letter="W" /></AppButton>
          <AppButton $open={3} $w={23} aria-label="Chrome profile"><Chrome /></AppButton>
          <AppButton $open={3} aria-label="Snipping Tool"><svg width="14" height="14" viewBox="0 0 14 14"><rect width="10" height="11" rx="1" fill="#e9e9ee" /><path d="M2 2h6v5H2z" fill="none" stroke="#d13b46" strokeDasharray="1 1" /><path d="M7 6l5 7M13 7l-6 4" stroke="#3a9ae8" strokeWidth="1.5" /></svg></AppButton>
          <AppButton $open={3} aria-label="Settings"><svg width="13" height="13" viewBox="0 0 26 26" fill="none"><circle cx="13" cy="13" r="8" stroke="#a8b4bf" strokeWidth="5" /><circle cx="13" cy="13" r="11" stroke="#a8b4bf" strokeWidth="4" strokeDasharray="5 3.64" /><circle cx="13" cy="13" r="4.5" fill="#2b65a8" /></svg></AppButton>
          <AppButton $active="#8e4650" $open={17} $w={23} aria-label="Telegram"><svg width="15" height="14" viewBox="0 0 15 14"><circle cx="6" cy="8" r="6" fill="#2fa5df" /><path d="M2 8l8-3-2 7-2-2-1 1v-2z" fill="#fff" /><rect x="7" width="8" height="6" rx="3" fill="#e8453c" /><text x="11" y="5" fontSize="4" fill="#fff" textAnchor="middle">18</text></svg></AppButton>
        </Apps>
        <Tray>
          <Icon s={6} sw={3}><path d="M2 11l6-6 6 6" /></Icon>
          <InputLang>ع</InputLang>
          <Icon s={9}><path d="M1 6c4-4 10-4 14 0M3 9c3-3 7-3 10 0M6 12c1-1 3-1 4 0" /><circle cx="8" cy="14" r="1" fill="#fff" /></Icon>
          <Icon s={9}><path d="M1 6h3l4-4v12l-4-4H1zM10 6c1 1 1 3 0 4M12 3c3 3 3 7 0 10" /></Icon>
          <Icon s={10}><path d="M1 4h12v8H1zM15 6v4" /><path d="M2 5h7v6H2z" fill="#59d66b" stroke="none" /><path d="M4 1v6" /></Icon>
          <Clock>8:09 PM<br />4/11/2026</Clock>
          <Icon s={9}><path d="M2 12h12l-2-3V5c0-5-8-5-8 0v4zM7 14h3M13 2h3" /></Icon>
        </Tray>
      </Taskbar>
    </Window>
  );
}
